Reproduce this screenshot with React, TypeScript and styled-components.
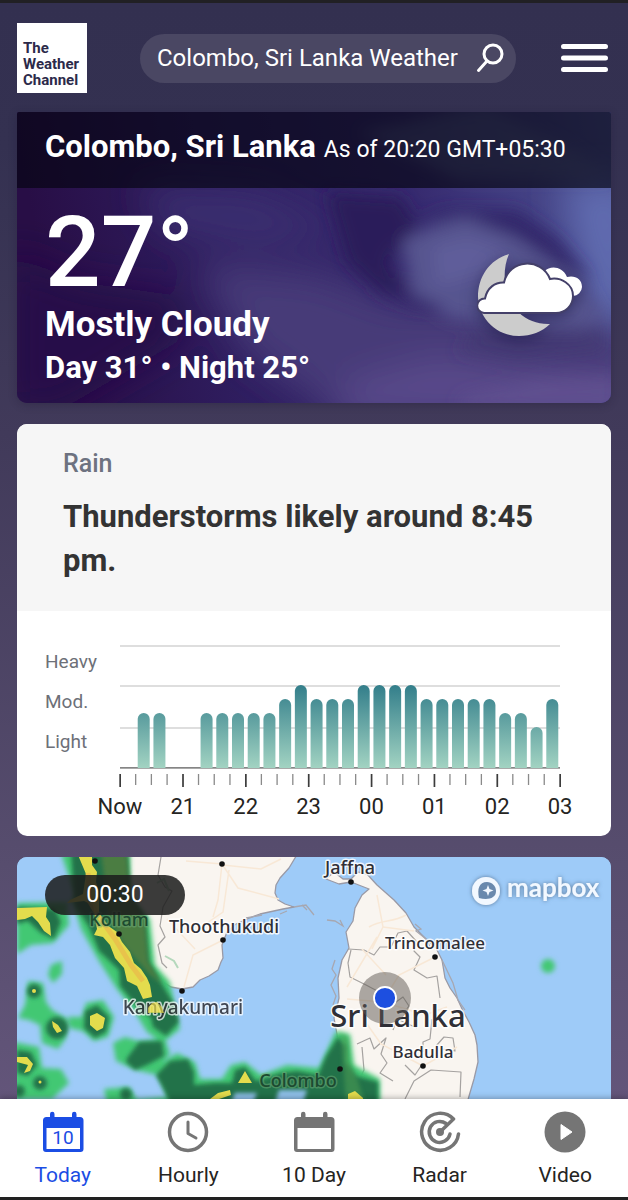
import styled, { createGlobalStyle, css } from "styled-components";

const GlobalStyle = createGlobalStyle`
  *, *::before, *::after { box-sizing: border-box; }
  body {
    margin: 0;
    font-family: Roboto, "Liberation Sans", sans-serif;
    color: #252422;
  }
  button, input { font: inherit; color: inherit; border: 0; background: none; padding: 0; }
  h1, h2, p { margin: 0; }
`;

const Page = styled.div`
  display: flex;
  flex-direction: column;
  min-height: 100vh;
  border-top: 3px solid #212024;
  background: linear-gradient(180deg, #333050 0%, #343151 12%, #413a5a 36%, #574d6e 72%, #63557a 92%);
`;

const Header = styled.header`
  display: flex;
  align-items: center;
  padding: 20px 17px 19px;
`;

const Logo = styled.a`
  display: flex;
  align-items: flex-end;
  flex: none;
  width: 70px;
  height: 70px;
  padding: 5px 6px;
  background: #fff;
  color: #2c2a4a;
  font-size: 15px;
  font-weight: 700;
  line-height: 16px;
  text-decoration: none;
`;

const SearchForm = styled.form`
  display: flex;
  align-items: center;
  flex: 1;
  min-width: 0;
  height: 49px;
  margin: 0 45px 0 53px;
  padding: 0 12px 0 17px;
  border-radius: 25px;
  background: #4a4763;
  color: #fff;
`;

const SearchInput = styled.input`
  flex: 1;
  min-width: 0;
  font-size: 24px;
  line-height: 32px;
  outline: none;
`;

const IconButton = styled.button<{ $width: number }>`
  display: flex;
  flex: none;
  width: ${(props) => props.$width}px;
  color: #fff;
  cursor: pointer;
`;

const Main = styled.main`
  display: flex;
  flex: 1;
  flex-direction: column;
  gap: 21px;
  padding: 0 17px;
`;

const Hero = styled.section`
  position: relative;
  overflow: hidden;
  border-radius: 2px 2px 10px 10px;
  background: #33235f;
  color: #fff;
  box-shadow: 0 2px 8px rgba(30, 24, 50, 0.3);
`;

const Sky = styled.svg`
  position: absolute;
  inset: 0;
  width: 100%;
  height: 100%;
`;

const HeroHead = styled.div`
  position: relative;
  display: flex;
  align-items: baseline;
  gap: 8px;
  height: 76px;
  padding: 15px 28px 0;
  background: rgba(4, 4, 16, 0.66);
  white-space: nowrap;
`;

const City = styled.h1`
  font-size: 31px;
  font-weight: 700;
  line-height: 40px;
`;

const Timestamp = styled.span`
  font-size: 23px;
`;

const HeroBody = styled.div`
  position: relative;
  display: flex;
  align-items: center;
  justify-content: space-between;
  height: 215px;
  padding: 0 26px 0 28px;
`;

const Temperature = styled.div`
  font-size: 98px;
  font-weight: 500;
  line-height: 100px;
`;

const Phrase = styled.p<{ $size: number }>`
  font-size: ${(props) => props.$size}px;
  font-weight: 700;
  line-height: 43px;
`;

const Card = styled.section`
  overflow: hidden;
  border-radius: 10px;
  background: #fff;
`;

const RainHead = styled.div`
  padding: 24px 46px 28px;
  background: #f6f6f6;
`;

const RainLabel = styled.p`
  margin-bottom: 15px;
  color: #6d7280;
  font-size: 25px;
  font-weight: 500;
  line-height: 32px;
`;

const RainTitle = styled.h2`
  color: #333333;
  font-size: 31px;
  font-weight: 700;
  line-height: 44px;
`;

const Drawing = styled.svg`
  display: block;
  width: 100%;
  height: auto;
`;

const LevelText = styled.text`
  fill: #6d7078;
  font-size: 19px;
`;

const HourText = styled.text`
  fill: #252422;
  font-size: 22px;
  text-anchor: middle;
`;

const MapCard = styled.section`
  position: relative;
  flex: 1;
  overflow: hidden;
  border-radius: 10px 10px 0 0;
  background: #9ecbf8;
`;

const MapTime = styled.div`
  position: absolute;
  top: 18px;
  left: 28px;
  width: 140px;
  border-radius: 20px;
  background: rgba(28, 28, 28, 0.86);
  color: #fff;
  font-size: 23px;
  line-height: 40px;
  text-align: center;
`;

const Place = styled.text<{ $size?: number; $faded?: boolean }>`
  fill: #2f2f36;
  stroke: rgba(255, 255, 255, 0.85);
  stroke-width: 3px;
  stroke-linejoin: round;
  paint-order: stroke;
  font-family: "Noto Sans", "Open Sans", sans-serif;
  font-size: ${(props) => props.$size ?? 18}px;
  font-weight: 500;
  text-anchor: middle;
  ${(props) =>
    props.$faded &&
    css`
      fill: #1c4a30;
      stroke: rgba(110, 170, 120, 0.5);
    `}
`;

const Brand = styled.text`
  fill: #f2f8ff;
  font-family: Lato, sans-serif;
  font-size: 26px;
  font-weight: 700;
`;

const TabBar = styled.nav`
  position: sticky;
  bottom: 0;
  display: grid;
  grid-template-columns: repeat(5, 1fr);
  height: 101px;
  border-bottom: 3px solid #212121;
  background: #fff;
  box-shadow: 0 -1px 6px rgba(0, 0, 0, 0.3);
`;

const Tab = styled.a<{ $active?: boolean }>`
  display: flex;
  flex-direction: column;
  align-items: center;
  gap: 8px;
  padding-top: 12px;
  color: ${(props) => (props.$active ? "#1b4de4" : "#252422")};
  font-size: 21px;
  line-height: 28px;
  text-decoration: none;

  svg {
    color: ${(props) => (props.$active ? "#1b4de4" : "#757575")};
  }
`;

// rain level for every 15 minutes, 0 = dry
const levels = [
  0, 2, 2, 0, 0, 2, 2, 2, 2, 2, 3, 4, 3, 3, 3, 4, 4, 4, 4, 3, 3, 3, 3, 3, 2, 2, 1, 3,
];
const barTops = [157, 117, 103, 89, 75];
const hours = ["Now", "21", "22", "23", "00", "01", "02", "03"];
const chartLeft = 103;
const step = 440 / 28;

function RainChart() {
  return (
    <Drawing viewBox="0 0 594 225" role="img" aria-label="Rain intensity">
      <defs>
        <linearGradient id="rain" gradientUnits="userSpaceOnUse" x1="0" y1="75" x2="0" y2="157">
          <stop offset="0" stopColor="#347f8b" />
          <stop offset="1" stopColor="#a2d3c2" />
        </linearGradient>
      </defs>
      <LevelText x="28" y="57">Heavy</LevelText>
      <LevelText x="28" y="97">Mod.</LevelText>
      <LevelText x="28" y="137">Light</LevelText>
      {[34, 74, 116].map((y) => (
        <rect key={y} x={chartLeft} y={y} width="440" height="2" fill="#dedede" />
      ))}
      <rect x={chartLeft} y="156" width="440" height="1.7" fill="#858585" />
      {levels.map((level, i) => {
        if (!level) return null;
        const x = chartLeft + i * step + 2;
        const top = barTops[level];
        return (
          <path
            key={x}
            d={`M${x} 157V${top + 5}a6 6 0 0 1 12 0V157Z`}
            fill="url(#rain)"
          />
        );
      })}
      {Array.from({ length: 29 }, (_, i) => (
        <rect
          key={i}
          x={chartLeft + i * step - 0.7}
          y="163"
          width={i % 4 ? 1.3 : 1.7}
          height={i % 4 ? 11 : 13}
          fill={i % 4 ? "#8a8a8a" : "#3c3c3c"}
        />
      ))}
      {hours.map((hour, i) => (
        <HourText key={hour} x={chartLeft + i * step * 4} y="203">
          {hour}
        </HourText>
      ))}
    </Drawing>
  );
}

const NightSky = () => (
  <Sky viewBox="0 0 594 291" preserveAspectRatio="none" aria-hidden="true">
    <defs>
      <linearGradient id="night" x1="0" y1="0.1" x2="1" y2="0">
        <stop offset="0" stopColor="#280e46" />
        <stop offset="0.3" stopColor="#2f1e60" />
        <stop offset="0.65" stopColor="#372b70" />
        <stop offset="1" stopColor="#4f5596" />
      </linearGradient>
      <filter id="haze" x="-20%" y="-20%" width="140%" height="140%">
        <feGaussianBlur stdDeviation="18" />
      </filter>
      <filter id="wisp" x="-20%" y="-20%" width="140%" height="140%">
        <feGaussianBlur stdDeviation="8" />
      </filter>
    </defs>
    <rect width="594" height="291" fill="url(#night)" />
    <g filter="url(#haze)">
      <path d="M120 75L240 80L330 120L250 135L150 120Z" fill="#3a2d70" />
      <path d="M180 150L300 160L380 190L620 200V310H330L230 240Z" fill="#463b78" />
      <path d="M330 270L420 245L620 270V310H320Z" fill="#59488a" />
      <path d="M-10 140L60 170L170 185L160 230L40 300H-10Z" fill="#280f4a" />
      <path d="M545 70H620V220L575 200Z" fill="#606cb0" />
    </g>
    <g filter="url(#wisp)">
      <path d="M310 80L385 85L400 115L370 150L395 185L360 178L330 150Z" fill="#2a1b5a" />
      <path d="M385 128L415 115L450 105L500 123L555 155L585 205L560 220L500 215L430 205L395 180Z" fill="#56548f" />
      <path d="M396 108L430 98L500 98L540 126L575 168L545 156L500 126L450 106Z" fill="#30276a" />
      <path d="M415 135L450 125L495 140L470 160L420 175Z" fill="#5f5d9a" />
      <path d="M355 180L400 184L430 197L400 196Z" fill="#34286a" />
      <path d="M460 215L585 215L590 240L500 250L440 240Z" fill="#40376f" opacity="0.600" />
      <path d="M445 285L520 268L600 262V295H440Z" fill="#6a5796" opacity="0.500" />
      <path d="M340 20L470 -5L560 40L594 66H440Z" fill="#606b9a" opacity="0.500" />
    </g>
  </Sky>
);

const CloudyNightIcon = () => (
  <svg
    width="108"
    height="86"
    viewBox="0 0 108 86"
    aria-label="Mostly cloudy night"
    style={{ filter: "drop-shadow(0 4px 8px rgba(20, 16, 60, 0.5))" }}
  >
    <path
      d="M32 1C12 7 1 24 1 44C2 66 20 83 42 83C54 83 65 79 73 71C50 72 30 55 28 31C27 20 28 10 32 1Z"
      fill="#ccc"
    />
    <path
      d="M68 18C72 13 85 12 90 24C98 22 105 26 105 34A9.500 9.500 0 0 1 96 43L72 34Z"
      fill="#fff"
    />
    <path
      d="M7 60A7 7 0 0 1 8 45.500C10 35 18 29 27 29.500C32 6 64 4 73 26C84 24 96 31 96 43C96 53 88 60 79 60Z"
      fill="#fff"
      stroke="#444069"
      strokeWidth="2"
    />
  </svg>
);

const places = [
  { name: "Jaffna", x: 333, y: 17 },
  { name: "Thoothukudi", x: 207, y: 76 },
  { name: "Trincomalee", x: 418, y: 92, size: 17 },
  { name: "Badulla", x: 406, y: 201, size: 17 },
];

const dots = [
  [205, 7], [206, 83], [165, 134], [102, 77], [78, 4], [334, 25], [418, 100], [406, 209], [323, 212],
];

function RadarMap() {
  return (
    <Drawing viewBox="0 0 594 242" role="img" aria-label="Radar map of Sri Lanka">
      <defs>
        <filter id="soft" x="-10%" y="-10%" width="120%" height="120%">
          <feGaussianBlur stdDeviation="2.500" />
        </filter>
        <filter id="edge" x="-10%" y="-10%" width="120%" height="120%">
          <feGaussianBlur stdDeviation="2" />
        </filter>
        <filter id="glow" x="-20%" y="-40%" width="140%" height="180%">
          <feDropShadow dx="0" dy="0" stdDeviation="2" floodColor="#44607f" floodOpacity="0.8" />
        </filter>
      </defs>
      <rect width="594" height="242" fill="#9ecbf8" />

      {/* mainland and island */}
      <g fill="#f9f5f0" stroke="#9a9aa6" strokeWidth="1.300" strokeLinejoin="round">
        <path d="M55-4L75 40L88 66L105 100L135 118L154 130L165 132L176 130L183 123L192 119L201 113L204 105L206 101L205 88L210 75L219 67L230 62L243 57L266 52L277 50L268 47L261 43L258 36L259 28L263 21L272 11L281-4Z" />
        <path d="M309 22L317 15L326 22L334 22L341 15L350 17L360 28L377 43L389 56L397 70L410 83L419 91L425 103L428 121L433 131L440 141L446 154L452 165L458 178L460 188L461 205L457 222L450 246H337L328 230L323 214L322 188L317 161L320 150L322 141L321 121L325 103L332 91L329 75L336 64L338 51L345 38L352 32L334 25L322 27Z" />
      </g>
      <g fill="none" stroke="#a7a7b0" strokeWidth="1.300">
        <path d="M277 50L289 48L297 58M229 61L245 58M263 57L270 54M285 48L290 53" />
        <path d="M310 63L318 64L326 69L323 63M318 103L315 112L319 118L314 128L319 139L316 148" />
        <path d="M398 67L404 72L399 74L409 82L413 90M425 103L436 126L441 143L448 153" />
      </g>
      <g fill="none" stroke="#a5a2a0" strokeWidth="1.200" strokeLinejoin="round">
        <path d="M144 0L141 18L148 30L155 34L146 50L143 69L148 80L141 88L145 106L150 111" />
        <path d="M331 92L347 93L357 98L363 90H374L381 76L390 74L399 84L397 94L403 100L397 113L410 121L420 119L423 141" />
        <path d="M334 93L331 106L333 120L349 128L366 137L372 150L386 140L392 149L386 157" />
        <path d="M340 187L353 181L357 192L369 181L364 197L370 206L363 216L376 224M376 173L380 162L400 171M415 162L413 182L406 185L406 195M419 189L427 180L436 181L438 194L425 192" />
        <path d="M388 242L397 224L414 213L444 215L443 240M404 209L398 218L388 208M345 190L347 213L343 221" />
      </g>
      <g fill="none" stroke="#f8e8d6" strokeWidth="1.500">
        <path d="M205 7L201 43L196 60M205 7L221 31L262 42M205 7L169 4M167 130L176 98L206 83M206 8L244 12L264 2M212 13L206 55L190 66M150 62L178 92" />
        <path d="M360 38L366 70L355 92M369 139L382 118L418 100M345 160L364 187L406 209M330 142L366 145L408 158L430 150M406 209L440 190M360 80L330 130" />
        <path d="M352 70C365 62 375 66 389 58M366 70L397 74M345 92L369 118" />
      </g>
      <path d="M148 99L157 104L161 111M140 26L147 22L152 34" fill="none" stroke="#b5d8bc" strokeWidth="2" />

      {/* light rain */}
      <g fill="#43c873" filter="url(#soft)">
        <path d="M44-4H113V40L133 62L138 108L153 125L158 150L163 172L145 186L130 175L118 155L100 132L82 104L64 72L56 45L0 46V97L14 88L36 86L52 68L50 48L58 38Z" />
        <path d="M34 108L45 104V117L36 126L31 118Z" />
        <path d="M11 124L26 126L29 145L35 153L50 162L49 181L41 192L25 186L23 168L12 163L1 161L8 148Z" />
        <path d="M51 160L65 160L69 146L86 143L97 160L91 180L77 184L66 174L52 171Z" />
        <path d="M-3 185L22 190L25 211L44 212L52 226L35 242H-3Z" />
        <path d="M96 186L108 180L121 184L148 182L153 197L145 206L160 196L178 205L183 222L205 222L214 208L228 205L244 218L270 208L302 211L319 174L333 177L337 208L363 222V246H90L87 232L112 230L120 243L151 240L140 218L119 213L99 204Z" />
        <ellipse cx="531" cy="109" rx="7" ry="7" />
      </g>
      {/* moderate rain */}
      <g fill="#24724a" filter="url(#edge)">
        <path d="M54-4H110L113 38L128 62L132 106L145 127L157 147L162 165L149 179L136 170L134 161L121 151L103 129L102 113L82 94L72 70L58 48Z" />
        <path d="M0 50L38 52L44 65L37 82L24 76L11 64L0 67Z" />
        <circle cx="17" cy="134" r="7" />
        <circle cx="40" cy="171" r="11" />
        <path d="M68 154L80 148L92 160L89 175L78 181L67 171Z" />
        <path d="M0 193L14 195L20 208L11 219L0 216Z" />
        <circle cx="23" cy="226" r="7" />
        <circle cx="2" cy="234" r="6" />
        <path d="M110 201L122 185L145 184L147 199L132 207L118 213L109 205Z" />
        <path d="M139 218L153 204L171 202L177 215V228L198 226L215 226L218 213L228 210L239 224L264 216L280 214L301 218L309 199L321 180L329 189V205L339 219L361 225V246H153L145 229Z" />
        <circle cx="109" cy="237" r="6" />
      </g>
      <path
        d="M84-4H110L113 38L128 62L131 104L145 127L132 117L108 90L92 62Z"
        fill="#4b7d43"
        filter="url(#edge)"
      />
      <path d="M218 236H240L236 246H214ZM262 233H290L286 246H258Z" fill="#8fc0ea" filter="url(#edge)" />
      <path d="M324 176L329 246H348L341 224L333 205L331 181Z" fill="#499a52" opacity="0.600" filter="url(#edge)" />
      {/* heavy rain */}
      <g fill="#e3dc4d">
        <path d="M61-2H75L75 8L80 15L79 25L82 34V55L87 66L100 75L105 85L113 95L117 106L124 112L130 121L133 128L135 140L126 142L120 129L110 124L107 111L98 101L93 88L86 80L77 78L80 72L76 48L67 44L50 46L53 43L66 37L69 17Z" />
        <path d="M0 51L30 50L29 60L33 66L34 79L27 74L21 65L15 59L8 62L0 63Z" />
        <path d="M35 164L41 168L45 174L40 176L36 170ZM73 159L80 156L88 161L86 171L80 174L73 168Z" />
        <path d="M0 200L10 200L16 207L13 214L7 216L11 208L0 205Z" />
        <path d="M228 214L235 226H221ZM193 242L201 236L213 233L214 238L202 242ZM131 149L138 145L146 155H131Z" />
        <path d="M331 246V237L338 234L346 241V246Z" />
        <circle cx="17" cy="134" r="2" />
        <circle cx="23" cy="225" r="1.500" />
      </g>
      <path
        d="M71 16L73 45L82 60L98 82L114 108L126 124"
        fill="none"
        stroke="#e9bd4b"
        strokeWidth="5"
        strokeLinejoin="round"
        opacity="0.800"
      />

      <Place x="166" y="157" $size={19} opacity="0.85">Kanyakumari</Place>
      <path d="M131 151L135 146L140 145L145 150L147 156H131Z" fill="#e3dc4d" opacity="0.700" />
      <Place x="102" y="69" $faded>Kollam</Place>
      <Place x="281" y="230" $faded>Colombo</Place>
      {places.map(({ name, x, y, size }) => (
        <Place key={name} x={x} y={y} $size={size}>
          {name}
        </Place>
      ))}
      {dots.map(([x, y]) => (
        <circle key={`${x}-${y}`} cx={x} cy={y} r="2.800" fill="#111" />
      ))}
      <Place x="381" y="170" $size={31}>Sri Lanka</Place>

      {/* current location */}
      <circle cx="368" cy="141" r="26" fill="#5d5852" opacity="0.500" />
      <circle cx="368" cy="141" r="11" fill="#1d4fe0" stroke="#fff" strokeWidth="1.800" />

      <g filter="url(#glow)">
        <circle cx="469" cy="34" r="14" fill="#f2f8ff" />
        <path d="M462 41C460 32 462 25 470 25C475 25 479 29 479 34C479 42 470 43 462 41Z" fill="#6b89ad" />
        <path d="M471 28L472.500 32L476.500 33.500L472.500 35L471 39L469.500 35L465.500 33.500L469.500 32Z" fill="#f2f8ff" />
        <Brand x="490" y="40">mapbox</Brand>
      </g>
    </Drawing>
  );
}

const CalendarIcon = ({ day }: { day?: string }) => (
  <svg width="42" height="42" viewBox="0 0 42 42" aria-hidden="true">
    <path
      d="M8 6V3a2 2 0 0 1 4.500 0V6H30V3a2 2 0 0 1 4.500 0V6H38a3.500 3.500 0 0 1 3.500 3.500V38a3 3 0 0 1-3 3H4a3 3 0 0 1-3-3V9.500A3.500 3.500 0 0 1 4.500 6ZM4.500 17V38H38V17Z"
      fill="currentColor"
      fillRule="evenodd"
    />
    {day && (
      <text x="21" y="33" textAnchor="middle" fontSize="19" fill="currentColor">
        {day}
      </text>
    )}
  </svg>
);

const ClockIcon = () => (
  <svg width="42" height="42" viewBox="0 0 42 42" fill="none" stroke="currentColor" aria-hidden="true">
    <circle cx="21" cy="21" r="18.500" strokeWidth="3.500" />
    <path d="M21 11V22.500L29 27" strokeWidth="3" strokeLinecap="round" strokeLinejoin="round" />
  </svg>
);

const RadarIcon = () => (
  <svg width="42" height="42" viewBox="0 0 42 42" fill="none" stroke="currentColor" aria-hidden="true">
    <g strokeWidth="3.500" strokeLinecap="round" strokeLinejoin="round">
      <path d="M39.500 23A18.500 18.500 0 1 1 34.500 8L21 21" />
      <path d="M31 23A10.500 10.500 0 1 1 27 12.500" />
    </g>
    <circle cx="21" cy="21" r="4" fill="currentColor" stroke="none" />
  </svg>
);

const PlayIcon = () => (
  <svg width="42" height="42" viewBox="0 0 42 42" aria-hidden="true">
    <circle cx="21" cy="21" r="20.500" fill="currentColor" />
    <path d="M17 13.500V28.500L28 21Z" fill="#fff" stroke="#fff" strokeLinejoin="round" />
  </svg>
);

const tabs = [
  { label: "Today", icon: <CalendarIcon day="10" />, active: true },
  { label: "Hourly", icon: <ClockIcon /> },
  { label: "10 Day", icon: <CalendarIcon /> },
  { label: "Radar", icon: <RadarIcon /> },
  { label: "Video", icon: <PlayIcon /> },
];

function App() {
  return (
    <Page>
      <GlobalStyle />
      <Header>
        <Logo href="#">
          <span>
            The
            <br />
            Weather
            <br />
            Channel
          </span>
        </Logo>
        <SearchForm role="search" onSubmit={(e) => e.preventDefault()}>
          <SearchInput aria-label="Search location" defaultValue="Colombo, Sri Lanka Weather" />
          <IconButton $width={28} type="submit" aria-label="Search">
            <svg width="28" height="30" viewBox="0 0 28 30" fill="none" stroke="currentColor" strokeWidth="3">
              <circle cx="17" cy="11" r="9" />
              <path d="M11 18L2.500 27.500" strokeLinecap="round" />
            </svg>
          </IconButton>
        </SearchForm>
        <IconButton $width={50} type="button" aria-label="Menu">
          <svg width="47" height="30" viewBox="0 0 47 30" stroke="currentColor" strokeWidth="5" strokeLinecap="round">
            <path d="M2.500 3.500H44.500M2.500 15H44.500M2.500 26.500H44.500" />
          </svg>
        </IconButton>
      </Header>
      <Main>
        <Hero>
          <NightSky />
          <HeroHead>
            <City>Colombo, Sri Lanka</City>
            <Timestamp>As of 20:20 GMT+05:30</Timestamp>
          </HeroHead>
          <HeroBody>
            <div>
              <Temperature>27°</Temperature>
              <Phrase $size={35}>Mostly Cloudy</Phrase>
              <Phrase $size={31}>Day 31° • Night 25°</Phrase>
            </div>
            <CloudyNightIcon />
          </HeroBody>
        </Hero>
        <Card>
          <RainHead>
            <RainLabel>Rain</RainLabel>
            <RainTitle>Thunderstorms likely around 8:45 pm.</RainTitle>
          </RainHead>
          <RainChart />
        </Card>
        <MapCard>
          <RadarMap />
          <MapTime>00:30</MapTime>
        </MapCard>
      </Main>
      <TabBar>
        {tabs.map(({ label, icon, active }) => (
          <Tab key={label} href="#" $active={active}>
            {icon}
            {label}
          </Tab>
        ))}
      </TabBar>
    </Page>
  );
}

export default App;
